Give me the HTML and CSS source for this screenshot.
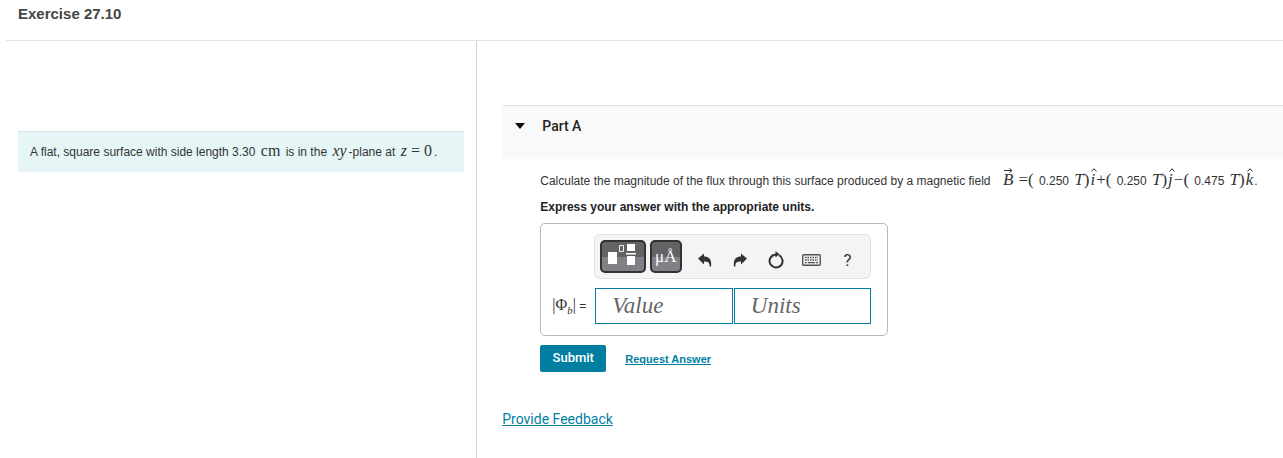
FILE: index.html
```html
<!DOCTYPE html>
<html lang="en">
<head>
    <meta charset="UTF-8">
    <meta name="viewport" content="width=device-width, initial-scale=1.0">
    <title>Exercise 27.10</title>
    <link rel="stylesheet" href="styles.css">
</head>
<body>

    <header class="page-header">
        <h1>Exercise 27.10</h1>
    </header>

    <main class="content">
        <!-- Problem statement -->
        <section class="problem">
            <p class="problem-text">A flat, square surface with side length 3.30 <span class="math">cm</span> is in the <i class="math">xy</i>-plane at <span class="math"><i>z</i> = 0</span>.</p>
        </section>

        <!-- Question and answer -->
        <section class="question">
            <div class="part-header">
                <button type="button" class="toggle" aria-label="Collapse Part A">
                    <svg width="10" height="6" viewBox="0 0 10 6"><path d="M0 0h10L5 6z" fill="#111"/></svg>
                </button>
                <h2>Part A</h2>
            </div>

            <form class="part-body">
                <p class="prompt">Calculate the magnitude of the flux through this surface produced by a magnetic field <span class="math formula"><i class="vec">B<svg width="9" height="5" viewBox="0 0 9 5"><path d="M0 2.5h8M5.5.5l2.5 2-2.5 2" fill="none" stroke="#333"/></svg></i> =( <span class="num">0.250</span> <i>T</i>)<i class="vec">i<svg width="6" height="4" viewBox="0 0 6 4"><path d="M.5 3.5 3 .7l2.5 2.8" fill="none" stroke="#333"/></svg></i>+( <span class="num">0.250</span> <i>T</i>)<i class="vec">j<svg width="6" height="4" viewBox="0 0 6 4"><path d="M.5 3.5 3 .7l2.5 2.8" fill="none" stroke="#333"/></svg></i>−( <span class="num">0.475</span> <i>T</i>)<i class="vec">k<svg width="6" height="4" viewBox="0 0 6 4"><path d="M.5 3.5 3 .7l2.5 2.8" fill="none" stroke="#333"/></svg></i></span>.</p>
                <p class="instructions">Express your answer with the appropriate units.</p>

                <div class="answer-box">
                    <div class="toolbar">
                        <button type="button" class="dark-btn templates" aria-label="Templates">
                            <svg width="32" height="27" viewBox="0 0 32 27">
                                <path d="M1 9h9v12H1zM20 1h8v7h-8zM20 13h8v9h-8zM19 10h10v1.500H19z" fill="#fff"/>
                                <path d="M12.500 2.500h4v6h-4z" fill="none" stroke="#eee"/>
                            </svg>
                        </button>
                        <button type="button" class="dark-btn symbols" aria-label="Symbols">μÅ</button>
                        <button type="button" class="tool" aria-label="Undo">
                            <svg width="14" height="14" viewBox="0 0 14 14"><path d="M0 5.500 6 .5v3c5 0 8 3 7 10h-1.500c.5-4-1.500-5-5.500-5v3z" fill="#333"/></svg>
                        </button>
                        <button type="button" class="tool" aria-label="Redo">
                            <svg width="14" height="14" viewBox="0 0 14 14"><path d="M14 5.500 8 .5v3c-5 0-8 3-7 10h1.500c-.5-4 1.500-5 5.500-5v3z" fill="#333"/></svg>
                        </button>
                        <button type="button" class="tool" aria-label="Reset">
                            <svg width="16" height="18" viewBox="0 0 16 18"><path d="M11 4.200A6.500 6.500 0 1 1 6.500 3.700h2" fill="none" stroke="#333" stroke-width="2"/><path d="m7.500 0 4 3.300-4 3.200z" fill="#333"/></svg>
                        </button>
                        <button type="button" class="tool" aria-label="Keyboard">
                            <svg width="19" height="12" viewBox="0 0 19 12"><rect x=".7" y=".7" width="17.600" height="10.600" rx="1" fill="#eee" stroke="#555" stroke-width="1.400"/><path d="M3 3.500h13M3 6h13" stroke="#555" stroke-width="1.500" stroke-dasharray="1.500 1"/><path d="M3 8.700h2m1 0h7m1 0h2" stroke="#555" stroke-width="1.300"/></svg>
                        </button>
                        <button type="button" class="tool help" aria-label="Help">?</button>
                    </div>

                    <div class="answer-row">
                        <label for="value"><span class="math">|Φ<sub>b</sub>|</span> =</label>
                        <div class="fields">
                            <input type="text" id="value" placeholder="Value">
                            <input type="text" id="units" placeholder="Units" aria-label="Units">
                        </div>
                    </div>
                </div>

                <div class="actions">
                    <button type="submit" class="submit">Submit</button>
                    <a href="#" class="request">Request Answer</a>
                </div>
            </form>

            <a href="#" class="feedback">Provide Feedback</a>
        </section>
    </main>

</body>
</html>
```
FILE: styles.css
```css
* {
    box-sizing: border-box;
}

body {
    display: flex;
    flex-direction: column;
    min-height: 100vh;
    margin: 0;
    font-family: "Liberation Sans", Arial, sans-serif;
    font-size: 12px;
    line-height: 20px;
    color: #333;
    background-color: white;
}

h1, h2, p {
    margin: 0;
}

button {
    padding: 0;
    border: none;
    background: none;
    cursor: pointer;
}

svg {
    display: block;
}

a {
    color: #007fa3;
}

.page-header {
    margin-left: 6px;
    padding: 4px 12px 16px;
    border-bottom: 1px solid #e4e4e4;
}

h1 {
    font-size: 15px;
    line-height: 20px;
    color: #444;
}

.content {
    display: flex;
    flex: 1;
}

.problem {
    width: 37.2%;
    padding: 90px 12px 0 18px;
    border-right: 1px solid #c5d3e2;
}

.problem-text {
    padding: 10px 12px;
    background-color: #e6f6f7;
    border-top: 1px solid #d5e3e4;
}

.math {
    margin: 0 2px;
    font-family: "Liberation Serif", "Times New Roman", serif;
    font-size: 16px;
    line-height: 16px;
}

.question {
    flex: 1;
    min-width: 0;
    padding: 64px 0 24px 25px;
}

.part-header {
    display: flex;
    gap: 16px;
    height: 54px;
    padding: 10px 12px;
    background-color: #f9f9f9;
    border-top: 1px solid #e0e0e0;
}

.toggle {
    display: flex;
    align-items: center;
    justify-content: center;
    width: 12px;
    height: 20px;
}

h2 {
    font-family: Roboto, sans-serif;
    font-size: 14px;
    font-weight: 500;
    line-height: 20px;
    color: #222;
}

.part-body {
    padding: 12px 0 0 38px;
}

.prompt {
    white-space: nowrap;
}

.formula {
    margin: 0 0 0 8px;
    font-size: 17px;
}

.num {
    margin: 0 1px;
    font-family: "Liberation Sans", Arial, sans-serif;
    font-size: 12px;
}

.vec {
    position: relative;
    margin: 0 1px;
}

/* accent over a vector letter */
.vec svg {
    position: absolute;
    top: -2px;
    left: 1px;
}

.instructions {
    margin-top: 6px;
    font-weight: bold;
    color: #222;
}

.answer-box {
    width: 348px;
    margin-top: 6px;
    padding: 10px 16px 11px 11px;
    border: 1px solid #b8b8b8;
    border-radius: 5px;
}

.toolbar {
    display: flex;
    align-items: center;
    height: 45px;
    margin-left: 42px;
    padding: 0 5px;
    background-color: #f4f4f4;
    border: 1px solid #e2e2e2;
    border-radius: 6px;
}

.dark-btn {
    display: flex;
    align-items: center;
    justify-content: center;
    height: 33px;
    border: 2px solid #333;
    border-radius: 5px;
    background: linear-gradient(#636366 50%, #808087 50%);
    color: white;
}

.templates {
    width: 46px;
}

.symbols {
    width: 32px;
    margin: 0 5px 0 4px;
    font-family: "Liberation Serif", serif;
    font-size: 17px;
}

.tool {
    display: flex;
    align-items: center;
    justify-content: center;
    width: 36px;
    height: 36px;
    padding-top: 6px;
}

.help {
    font-family: Roboto, sans-serif;
    font-size: 17px;
    color: #333;
}

.answer-row {
    display: flex;
    align-items: center;
    margin-top: 9px;
}

.answer-row label {
    flex: none;
    width: 43px;
    white-space: nowrap;
}

.answer-row .math {
    margin: 0;
}

.answer-row sub {
    font-size: 11px;
    font-style: italic;
    line-height: 0;
}

.fields {
    display: flex;
    flex: 1;
    gap: 1px;
    min-width: 0;
}

.fields input {
    flex: 1;
    min-width: 0;
    height: 36px;
    padding: 0 16px;
    border: 1px solid #007fa3;
    border-radius: 0;
    font-family: "Liberation Serif", "Times New Roman", serif;
    font-size: 23px;
    font-style: italic;
}

.fields input::placeholder {
    color: #666;
}

.actions {
    display: flex;
    align-items: center;
    gap: 19px;
    margin-top: 9px;
}

.submit {
    width: 66px;
    height: 27px;
    padding-bottom: 3px;
    border-radius: 2px;
    background-color: #007fa3;
    color: white;
    font-family: Roboto, sans-serif;
    font-size: 13px;
    font-weight: 500;
}

.request {
    font-size: 11px;
    font-weight: bold;
}

.feedback {
    display: inline-block;
    margin-top: 37px;
    font-family: Roboto, sans-serif;
    font-size: 14px;
}
```
